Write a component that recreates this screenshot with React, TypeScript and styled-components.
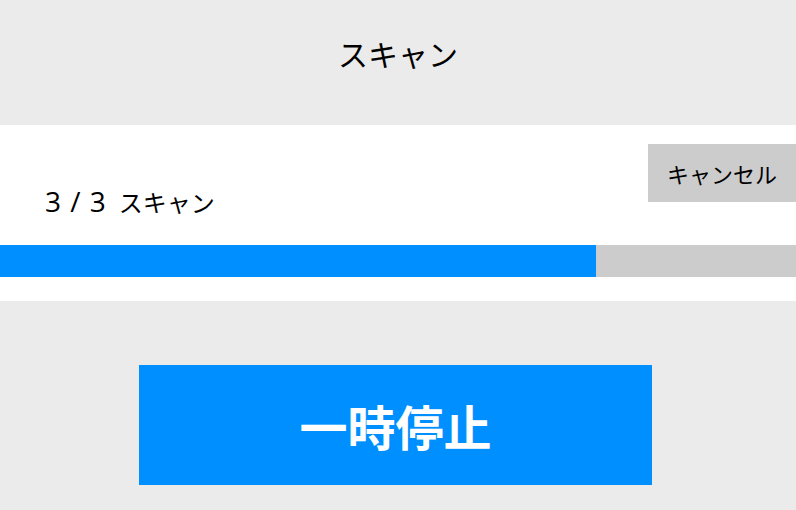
import React from "react";
import styled, { createGlobalStyle } from "styled-components";

const GlobalStyle = createGlobalStyle`
  html, body {
    margin: 0;
    padding: 0;
    background: #ebebeb;
    font-family: "Noto Sans CJK JP", "Noto Sans", sans-serif;
    color: #000;
  }
`;

const App: React.FC = () => {
  const done = 3;
  const total = 3;
  const progress = 596 / 796;

  return (
    <Page>
      <GlobalStyle />
      <Header>
        <Title>スキャン</Title>
      </Header>
      <Panel>
        <TopRow>
          <Status>
            <Count>
              {done} / {total}
            </Count>
            スキャン
          </Status>
          <CancelButton>キャンセル</CancelButton>
        </TopRow>
        <Track>
          <Fill style={{ width: `${progress * 100}%` }} />
        </Track>
      </Panel>
      <Footer>
        <PauseButton>一時停止</PauseButton>
      </Footer>
    </Page>
  );
};

export default App;

const Page = styled.div`
  display: flex;
  flex-direction: column;
  width: 796px;
  min-height: 510px;
  background: #ebebeb;
`;

const Header = styled.div`
  height: 125px;
  display: flex;
  justify-content: center;
  padding-top: 33px;
  box-sizing: border-box;
`;

const Title = styled.h1`
  margin: 0;
  font-size: 30px;
  font-weight: 400;
  line-height: 40px;
`;

const Panel = styled.div`
  background: #ffffff;
  padding: 19px 0 24px 0;
  display: flex;
  flex-direction: column;
`;

const TopRow = styled.div`
  display: flex;
  justify-content: space-between;
  align-items: flex-start;
  height: 58px;
`;

const Status = styled.span`
  margin: 41px 0 0 45px;
  font-size: 24px;
  line-height: 32px;
  white-space: nowrap;
`;

const Count = styled.span`
  font-family: "Open Sans", "Noto Sans CJK JP", sans-serif;
  font-size: 28px;
  word-spacing: 2px;
  margin-right: 13px;
`;

const CancelButton = styled.button`
  width: 148px;
  height: 58px;
  border: none;
  border-radius: 0;
  background: #cccccc;
  font-family: inherit;
  font-size: 22px;
  color: #000;
  padding: 0;
`;

const Track = styled.div`
  margin-top: 43px;
  height: 32px;
  background: #cccccc;
`;

const Fill = styled.div`
  height: 100%;
  background: #008fff;
`;

const Footer = styled.div`
  padding: 64px 0 0 139px;
`;

const PauseButton = styled.button`
  width: 513px;
  height: 120px;
  border: none;
  border-radius: 0;
  background: #008fff;
  color: #ffffff;
  font-family: inherit;
  font-size: 48px;
  font-weight: 700;
  padding: 0;
`;
